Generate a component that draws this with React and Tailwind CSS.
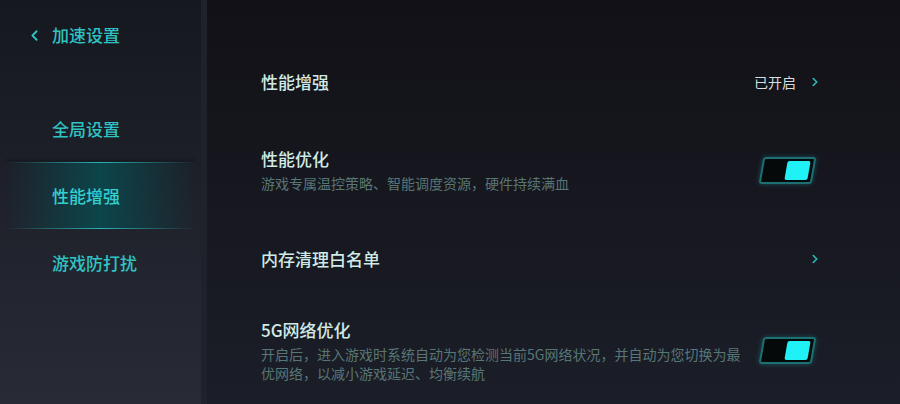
import { ChevronLeft, ChevronRight } from 'lucide-react';

const font = { fontFamily: '"Noto Sans CJK SC", "Noto Sans", sans-serif' };

function Toggle() {
  return (
    <div className="mr-[8px] -skew-x-[10deg] w-[53px] h-[27px] rounded-[3px] border-2 border-[#1c6f72] bg-[#060909] shadow-[0_0_5px_rgba(30,190,195,0.35)] flex justify-end items-center pr-[3px]">
      <div className="w-[23px] h-[19px] rounded-[2px] bg-[#1ff1f6]" />
    </div>
  );
}

function SideItem({ label, active }) {
  if (active) {
    return (
      <div className="h-[67px] flex flex-col mx-[6px]">
        <div className="h-px bg-gradient-to-r from-transparent via-[#27b3b6] to-transparent shadow-[0_-2px_3px_rgba(0,0,0,0.6)]" />
        <div className="flex-1 flex items-center pl-[46px] bg-gradient-to-r from-transparent via-[#0c454b] to-transparent">
          <span className="text-[17px] font-medium text-[#34d0d0]">{label}</span>
        </div>
        <div className="h-px bg-gradient-to-r from-transparent via-[#27b3b6] to-transparent" />
      </div>
    );
  }
  return (
    <div className="h-[67px] flex items-center pl-[52px]">
      <span className="text-[17px] font-medium text-[#2fc3c3]">{label}</span>
    </div>
  );
}

export default function App() {
  return (
    <div className="w-[900px] h-[404px] flex overflow-hidden" style={font}>
      {/* sidebar */}
      <div className="w-[207px] h-full flex flex-col pt-[23px] bg-gradient-to-b from-[#16181f] to-[#282b36] border-r-[6px] border-[#1f222b]">
        <div className="h-6 flex items-center pl-[26px] gap-[9px]">
          <ChevronLeft size={17} strokeWidth={2.5} color="#2fc3c3" />
          <span className="text-[17px] font-medium text-[#2fc3c3]">加速设置</span>
        </div>
        <div className="mt-[48px] flex flex-col">
          <SideItem label="全局设置" />
          <SideItem label="性能增强" active />
          <SideItem label="游戏防打扰" />
        </div>
      </div>

      {/* main */}
      <div className="flex-1 h-full flex flex-col pl-[54px] pr-[78px] pt-[48px] bg-gradient-to-b from-[#121117] to-[#1b1e28]">
        <div className="h-[68px] flex items-center justify-between">
          <span className="text-[17px] font-medium text-[#d0eae6]">性能增强</span>
          <div className="flex items-center gap-[12px]">
            <span className="text-[14px] text-[#d6dede]">已开启</span>
            <ChevronRight size={14} strokeWidth={2.8} color="#2bbcbc" />
          </div>
        </div>

        <div className="mt-[31px] flex items-center justify-between">
          <div className="flex flex-col">
            <span className="text-[17px] leading-[24px] font-medium text-[#d0eae6]">性能优化</span>
            <span className="mt-[3px] text-[14px] leading-[19px] text-[#587676]">游戏专属温控策略、智能调度资源，硬件持续满血</span>
          </div>
          <Toggle />
        </div>

        <div className="mt-[54px] h-6 flex items-center justify-between">
          <span className="text-[17px] leading-[24px] font-medium text-[#d0eae6]">内存清理白名单</span>
          <ChevronRight size={14} strokeWidth={2.8} color="#2bbcbc" />
        </div>

        <div className="mt-[47px] flex items-center justify-between">
          <div className="flex flex-col">
            <span className="text-[17px] leading-[24px] font-medium text-[#d0eae6]">5G网络优化</span>
            <span className="mt-[3px] text-[14px] leading-[19px] text-[#587676] whitespace-nowrap">
              开启后，进入游戏时系统自动为您检测当前5G网络状况，并自动为您切换为最
              <br />
              优网络，以减小游戏延迟、均衡续航
            </span>
          </div>
          <Toggle />
        </div>
      </div>
    </div>
  );
}
